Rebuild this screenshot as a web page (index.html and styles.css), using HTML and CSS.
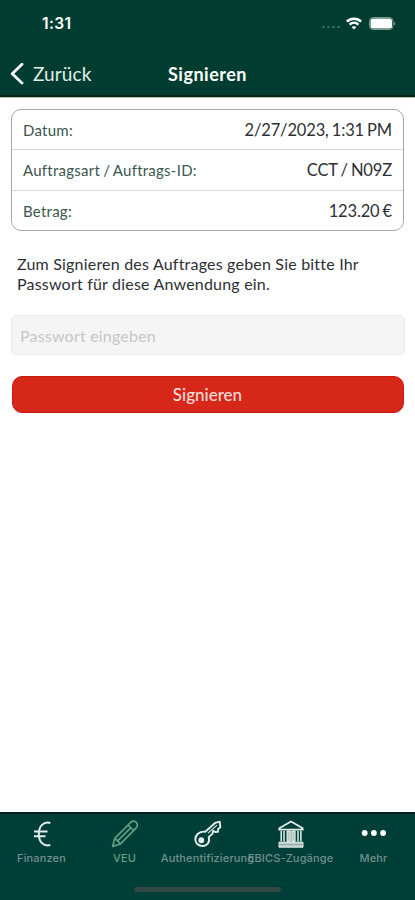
FILE: index.html
```
<!DOCTYPE html>
<html lang="de">

<head>
    <meta charset="UTF-8">
    <meta name="viewport" content="width=device-width, initial-scale=1.0">
    <title>Signieren</title>
    <link rel="stylesheet" href="styles.css">
</head>

<body>
    <!-- Status bar and navigation -->
    <header class="header">
        <div class="status-bar">
            <span class="time">1:31</span>
            <div class="status-icons">
                <div class="signal"><i></i><i></i><i></i><i></i></div>
                <svg class="wifi" width="16" height="13" viewBox="0 0 16 13" fill="none" stroke="#fff" stroke-width="2.4">
                    <path d="M.9 4.6C4.8.7 11.2.7 15.1 4.6" />
                    <path d="M3.6 7.6c2.5-2.4 6.3-2.4 8.8 0" />
                    <path d="M8 12.6 5.6 10.1c1.3-1.3 3.5-1.3 4.8 0z" fill="#fff" stroke="none" />
                </svg>
                <svg class="battery" width="27" height="13" viewBox="0 0 27 13">
                    <rect x=".5" y=".5" width="23.5" height="12" rx="3.7" fill="none" stroke="#7d9f94" />
                    <rect x="1.5" y="1.5" width="21.5" height="10" rx="2.5" fill="#fff" />
                    <path d="M25.2 4.5c1.6.7 1.6 3.3 0 4z" fill="#7d9f94" />
                </svg>
            </div>
        </div>
        <nav class="nav-bar">
            <a class="back">
                <svg width="14" height="22" viewBox="0 0 14 22" fill="none" stroke="#fff" stroke-width="2.8" stroke-linecap="round" stroke-linejoin="round">
                    <path d="M12 1.3 2.2 10.7 12 19.9" />
                </svg>
                <span>Zurück</span>
            </a>
            <h1 class="title">Signieren</h1>
        </nav>
    </header>

    <main class="content">
        <!-- Order details -->
        <dl class="details">
            <div class="row">
                <dt>Datum:</dt>
                <dd>2/27/2023, 1:31 PM</dd>
            </div>
            <div class="row">
                <dt>Auftragsart / Auftrags-ID:</dt>
                <dd>CCT / N09Z</dd>
            </div>
            <div class="row">
                <dt>Betrag:</dt>
                <dd>123.20 €</dd>
            </div>
        </dl>

        <p class="hint">Zum Signieren des Auftrages geben Sie bitte Ihr<br>Passwort für diese Anwendung ein.</p>
        <input class="password" type="password" placeholder="Passwort eingeben">
        <button class="sign-btn">Signieren</button>
    </main>

    <!-- Tab bar -->
    <footer class="tab-bar">
        <a class="tab">
            <svg width="30" height="30" viewBox="0 0 30 30" fill="none" stroke="#e4efec" stroke-width="2">
                <path d="M23.3 4C16.5 2.2 11.8 7.2 11.8 15s4.7 12.8 11.5 11M7 12.6h13.5M7 17.2h11.5" />
            </svg>
            <span>Finanzen</span>
        </a>
        <a class="tab active">
            <svg width="30" height="30" viewBox="0 0 30 30" fill="none" stroke="#5fa183" stroke-width="1.6" stroke-linejoin="round">
                <path d="M2.6 27.4 4.8 19.4 20.7 3.4c1.7-1.8 4-1.5 5.5 0s1.7 3.8 0 5.5L10.5 24.9z" />
                <path d="m4.8 19.4 5.7 5.5M18 6l5.7 5.5M7.6 21.9 20.9 8.6M3 25l2.2 2" />
            </svg>
            <span>VEU</span>
        </a>
        <a class="tab">
            <svg width="30" height="30" viewBox="0 0 30 30" fill="none" stroke="#e4efec" stroke-width="1.9" stroke-linejoin="round">
                <path d="M12.3 12.8 22.3 3.8l4.4-1.2.6 5.7-2.2 1.7-.1 2.8-2.8.2-2-1.2-.9 3.1-3.6 3.2c1.6 4.7-1.3 8.9-6.2 8.9-4.2 0-7.2-2.9-7.2-6.8 0-4.8 4.6-8.2 10-7.4z" />
                <circle cx="8.3" cy="21.3" r="2" fill="#e4efec" />
                <path d="m15 14.1 9-8" stroke-width="1.1" />
            </svg>
            <span>Authentifizierung</span>
        </a>
        <a class="tab">
            <svg width="30" height="30" viewBox="0 0 30 30" fill="none" stroke="#e4efec">
                <path d="M3.3 9.3 15 2.6l11.7 6.7v1.4H3.3z" stroke-width="1.7" />
                <path d="M5.2 12v10.5M8 12v10.5M22 12v10.5M24.9 12v10.5" stroke-width="1.5" />
                <path d="M11 12h3.3v10.5H11zM15.8 12h3.3v10.5h-3.3z" fill="#b8cbc6" stroke-width="1" />
                <path d="M3 23.2h24v5H3z" fill="#bdcfcb" stroke-width="1" />
                <path d="M3 25.6h24" stroke="#87a59e" stroke-width=".8" />
            </svg>
            <span>EBICS-Zugänge</span>
        </a>
        <a class="tab">
            <svg width="30" height="30" viewBox="0 0 30 30" fill="#fff">
                <circle cx="5.7" cy="14" r="2.9" />
                <circle cx="14.9" cy="14" r="2.9" />
                <circle cx="24.1" cy="14" r="2.9" />
            </svg>
            <span>Mehr</span>
        </a>
        <div class="home-indicator"></div>
    </footer>
</body>

</html>
```

FILE: styles.css
```
* {
    box-sizing: border-box;
}

body {
    margin: 0;
    height: 900px;
    display: flex;
    flex-direction: column;
    overflow: hidden;
    background: #fff;
    font-family: Lato, "Liberation Sans", sans-serif;
    color: #2c3034;
}

.header {
    height: 97px;
    background: #003d30;
    border-bottom: 2px solid #00260f;
    box-shadow: 0 1px 0 #b5c1b8;
    color: #fff;
}

.status-bar {
    height: 46px;
    padding: 0 19px 0 42px;
    display: flex;
    align-items: center;
    justify-content: space-between;
}

.time {
    font: 600 15.5px Inter, sans-serif;
    letter-spacing: 0.4px;
}

.status-icons {
    display: flex;
    align-items: center;
}

.signal {
    display: flex;
    gap: 2px;
    margin: 8px 6px 0 0;
}

.signal i {
    width: 3px;
    height: 2px;
    border-radius: 1px;
    background: #3f6c5f;
}

.wifi {
    margin-right: 7px;
}

.nav-bar {
    height: 55px;
    display: grid;
    grid-template-columns: 1fr auto 1fr;
    align-items: center;
    padding: 0 10px;
}

.back {
    display: flex;
    align-items: center;
    gap: 9px;
    font-size: 19px;
    letter-spacing: 0.1px;
    color: #e6eeea;
}

.title {
    margin: 0;
    font-size: 18px;
    font-weight: 700;
    letter-spacing: 0.5px;
}

.content {
    flex: 1;
    padding: 12px 11px 0;
}

.details {
    margin: 0;
    height: 122px;
    display: grid;
    grid-template-rows: 39px 41px 40px;
    border: 1px solid #a5a9a7;
    border-radius: 10px;
}

.row {
    padding: 0 11px;
    display: flex;
    align-items: center;
    justify-content: space-between;
}

.row + .row {
    border-top: 1px solid #d5d6d6;
}

.row dt {
    font-size: 15px;
    letter-spacing: 0.25px;
    word-spacing: -1px;
    color: #3a564e;
}

.row dd {
    margin: 0;
    font-size: 16.5px;
    letter-spacing: -0.15px;
    word-spacing: -1px;
}

.hint {
    margin: 23px 6px 21px;
    font-size: 16px;
    letter-spacing: 0.2px;
    line-height: 20px;
    white-space: nowrap;
}

.password {
    display: block;
    width: 394px;
    height: 40px;
    padding: 0 8px;
    border: 1px solid #ededed;
    border-radius: 5px;
    background: #f5f5f5;
    font: 16px Lato, sans-serif;
    letter-spacing: 0.2px;
}

.password::placeholder {
    color: #c5c6c9;
}

.sign-btn {
    display: block;
    width: 392px;
    height: 37px;
    margin: 21px 0 0 1px;
    padding: 0 1px 0 0;
    border: 1px solid #c51a10;
    border-radius: 10px;
    background: #d62718;
    color: #f8dedb;
    font: 500 17px Lato, sans-serif;
}

.tab-bar {
    position: relative;
    height: 88px;
    padding-top: 5px;
    display: grid;
    grid-template-columns: repeat(5, 83px);
    background: #003f38;
    border-top: 2px solid #051c1d;
}

.tab {
    display: flex;
    flex-direction: column;
    align-items: center;
    color: #70908c;
    font: 500 11px Inter, sans-serif;
    letter-spacing: 0.15px;
    white-space: nowrap;
}

.tab span {
    margin-top: 2px;
}

.active {
    color: #5fa183;
}

.home-indicator {
    position: absolute;
    left: 134px;
    bottom: 8px;
    width: 147px;
    height: 5px;
    border-radius: 3px;
    background: #304743;
}
```
